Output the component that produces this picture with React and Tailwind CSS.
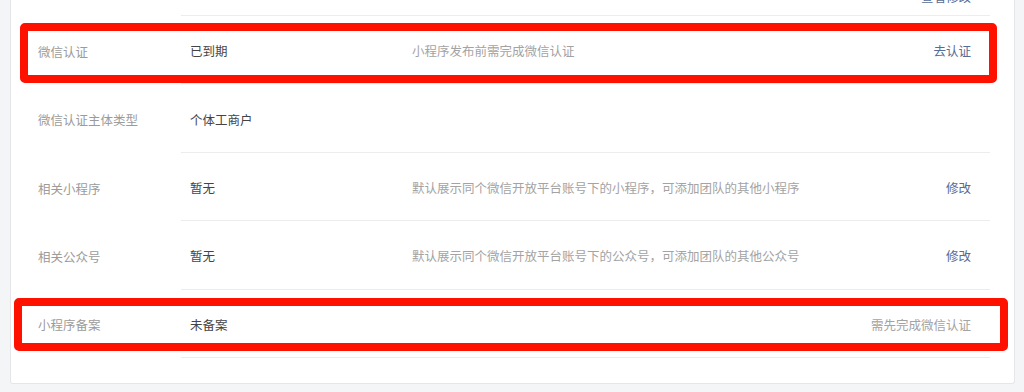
import React from 'react';

const rows = [
    { label: '微信认证', value: '已到期', desc: '小程序发布前需完成微信认证', action: '去认证', link: true },
    { label: '微信认证主体类型', value: '个体工商户', desc: '', action: '' },
    { label: '相关小程序', value: '暂无', desc: '默认展示同个微信开放平台账号下的小程序，可添加团队的其他小程序', action: '修改', link: true },
    { label: '相关公众号', value: '暂无', desc: '默认展示同个微信开放平台账号下的公众号，可添加团队的其他公众号', action: '修改', link: true },
    { label: '小程序备案', value: '未备案', desc: '', action: '需先完成微信认证', link: false },
];

const InfoRow = ({ item }) => (
    <div className="flex h-[68.4px]">
        <div className="w-[170px] pl-[27px] pt-[4px] flex items-center text-[#9b9b9b] shrink-0">{item.label}</div>
        <div className="flex-1 flex items-center border-b border-[#ececec] mr-[24px] pl-[9px] pr-[19px] pt-[4px]">
            <div className="w-[222px] text-[#444] shrink-0">{item.value}</div>
            <div className="flex-1 text-[#a3a3a3]">{item.desc}</div>
            <div className={item.link ? 'text-[#576b95]' : 'text-[#a3a3a3]'}>{item.action}</div>
        </div>
    </div>
);

const App = () => {
    return (
        <div className="h-[392px] overflow-hidden bg-[#f4f5f7] px-[10px] text-[12.5px] relative" style={{ fontFamily: '"Noto Sans CJK SC", "Noto Sans", sans-serif' }}>
            <div className="bg-white border-x border-b border-[#e5e6e9] rounded-b-[3px] pb-[25px] w-[1005px]">
                {/* tail of previous row */}
                <div className="flex h-[16px]">
                    <div className="w-[170px] shrink-0" />
                    <div className="flex-1 flex justify-end items-start border-b border-[#ececec] mr-[24px] pr-[19px]">
                        <span className="text-[#576b95] leading-[13px] -mt-[10px]">查看修改</span>
                    </div>
                </div>
                {rows.map(item => (
                    <InfoRow key={item.label} item={item} />
                ))}
            </div>

            {/* annotation boxes */}
            <div className="absolute left-[20px] top-[23px] w-[977px] h-[60px] border-[8px] border-[#ff1100] rounded-[5px]" />
            <div className="absolute left-[14px] top-[298px] w-[994px] h-[53px] border-[8px] border-[#ff1100] rounded-[5px]" />
        </div>
    );
};

export default App;
